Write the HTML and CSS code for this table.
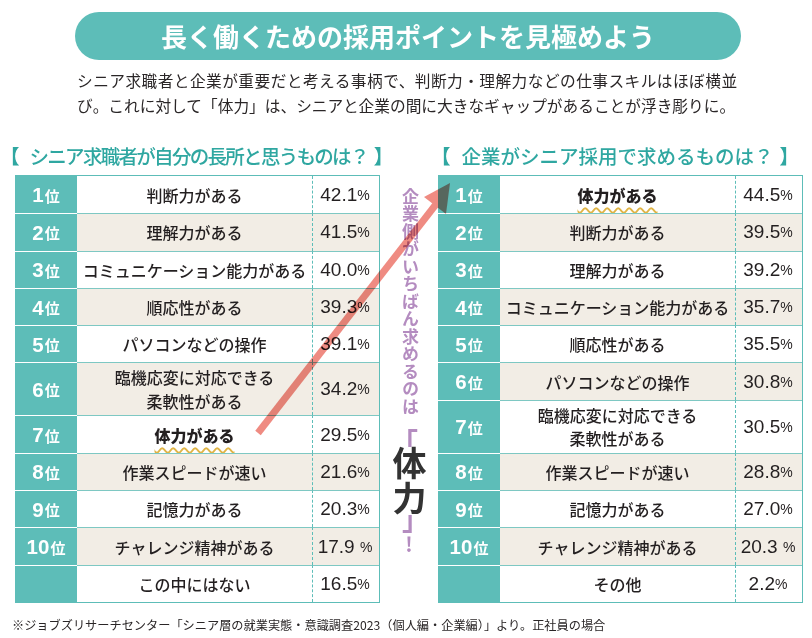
FILE: index.html
```html
<!DOCTYPE html>
<html lang="ja">
<head>
<meta charset="utf-8">
<link rel="stylesheet" href="styles.css">
</head>
<body>
<div class="page">
  <h1 class="title">長く働くための採用ポイントを見極めよう</h1>
  <p class="lead"><span class="l1">シニア求職者と企業が重要だと考える事柄で、判断力・理解力などの仕事スキルはほぼ横並</span><br><span class="l2">び。これに対して「体力」は、シニアと企業の間に大きなギャップがあることが浮き彫りに。</span></p>

  <div class="main">
    <h2 class="head head-left"><span class="bk bk-o">【</span><span class="ht">シニア求職者が自分の長所と思うものは？</span><span class="bk bk-c">】</span></h2>
    <h2 class="head head-right"><span class="bk bk-o">【</span><span class="ht">企業がシニア採用で求めるものは？</span><span class="bk bk-c">】</span></h2>

    <div class="rank-table t-left">
      <div class="row"><div class="rk"><b>1</b>位</div><div class="lb">判断力がある</div><div class="pc">42.1<small>%</small></div></div>
      <div class="row alt"><div class="rk"><b>2</b>位</div><div class="lb">理解力がある</div><div class="pc">41.5<small>%</small></div></div>
      <div class="row"><div class="rk"><b>3</b>位</div><div class="lb">コミュニケーション能力がある</div><div class="pc">40.0<small>%</small></div></div>
      <div class="row alt"><div class="rk"><b>4</b>位</div><div class="lb">順応性がある</div><div class="pc">39.3<small>%</small></div></div>
      <div class="row"><div class="rk"><b>5</b>位</div><div class="lb">パソコンなどの操作</div><div class="pc">39.1<small>%</small></div></div>
      <div class="row alt tall"><div class="rk"><b>6</b>位</div><div class="lb two">臨機応変に対応できる<br>柔軟性がある</div><div class="pc">34.2<small>%</small></div></div>
      <div class="row"><div class="rk"><b>7</b>位</div><div class="lb"><span class="hl">体力がある</span></div><div class="pc">29.5<small>%</small></div></div>
      <div class="row alt"><div class="rk"><b>8</b>位</div><div class="lb">作業スピードが速い</div><div class="pc">21.6<small>%</small></div></div>
      <div class="row"><div class="rk"><b>9</b>位</div><div class="lb">記憶力がある</div><div class="pc">20.3<small>%</small></div></div>
      <div class="row alt"><div class="rk"><b>10</b>位</div><div class="lb">チャレンジ精神がある</div><div class="pc">17.9 <small>%</small></div></div>
      <div class="row"><div class="rk"></div><div class="lb">この中にはない</div><div class="pc">16.5<small>%</small></div></div>
    </div>

    <div class="middle">
      <div class="vphrase">企業側がいちばん求めるのは</div>
      <div class="br br-open">「</div>
      <div class="big">体力</div>
      <div class="br br-close">」</div>
      <div class="excl">!</div>
    </div>

    <div class="rank-table t-right">
      <div class="row"><div class="rk"><b>1</b>位</div><div class="lb"><span class="hl">体力がある</span></div><div class="pc">44.5<small>%</small></div></div>
      <div class="row alt"><div class="rk"><b>2</b>位</div><div class="lb">判断力がある</div><div class="pc">39.5<small>%</small></div></div>
      <div class="row"><div class="rk"><b>3</b>位</div><div class="lb">理解力がある</div><div class="pc">39.2<small>%</small></div></div>
      <div class="row alt"><div class="rk"><b>4</b>位</div><div class="lb">コミュニケーション能力がある</div><div class="pc">35.7<small>%</small></div></div>
      <div class="row"><div class="rk"><b>5</b>位</div><div class="lb">順応性がある</div><div class="pc">35.5<small>%</small></div></div>
      <div class="row alt"><div class="rk"><b>6</b>位</div><div class="lb">パソコンなどの操作</div><div class="pc">30.8<small>%</small></div></div>
      <div class="row tall"><div class="rk"><b>7</b>位</div><div class="lb two">臨機応変に対応できる<br>柔軟性がある</div><div class="pc">30.5<small>%</small></div></div>
      <div class="row alt"><div class="rk"><b>8</b>位</div><div class="lb">作業スピードが速い</div><div class="pc">28.8<small>%</small></div></div>
      <div class="row"><div class="rk"><b>9</b>位</div><div class="lb">記憶力がある</div><div class="pc">27.0<small>%</small></div></div>
      <div class="row alt"><div class="rk"><b>10</b>位</div><div class="lb">チャレンジ精神がある</div><div class="pc">20.3 <small>%</small></div></div>
      <div class="row"><div class="rk"></div><div class="lb">その他</div><div class="pc">2.2<small>%</small></div></div>
    </div>
  </div>

  <p class="note">※ジョブズリサーチセンター「シニア層の就業実態・意識調査2023（個人編・企業編）」より。正社員の場合</p>

  <svg class="arrow" width="812" height="638" viewBox="0 0 812 638">
    <line x1="258" y1="433" x2="437" y2="203" stroke="#ef8b82" stroke-width="7" stroke-linecap="butt"/>
    <polygon points="450,183 446,214 424,197" fill="#ef8b82"/>
  </svg>
</div>
</body>
</html>
```

FILE: styles.css
```css
* { box-sizing: border-box; }
html, body { margin: 0; padding: 0; background: #fff; }
body {
  font-family: "Noto Sans CJK JP", "Noto Sans", sans-serif;
  color: #231f20;
}
.page {
  position: relative;
  width: 812px;
  height: 638px;
  overflow: hidden;
}
.title {
  margin: 12px 0 0 75px;
  width: 666px;
  height: 48px;
  border-radius: 24px;
  background: #5dbdb8;
  color: #fff;
  font-size: 26px;
  font-weight: 700;
  line-height: 48px;
  text-align: center;
}
.lead {
  margin: 8px 0 0 77px;
  font-size: 15.7px;
  line-height: 25px;
  color: #2a2627;
  white-space: nowrap;
}
.lead .l1 { letter-spacing: 0.45px; }
.lead .l2 { letter-spacing: 0; }
.main {
  display: grid;
  grid-template-columns: 365px 58px 365px;
  grid-template-rows: 28px auto;
  row-gap: 5px;
  margin: 24px 0 0 15px;
}
.head {
  margin: 0;
  display: flex;
  align-items: center;
  font-size: 19.5px;
  font-weight: 500;
  line-height: 28px;
  color: #2fa7a1;
  white-space: nowrap;
}
.bk { font-weight: 700; }
.head-left {
  grid-column: 1 / 3;
  grid-row: 1;
  margin-left: -15px;
}
.head-left .bk-o { margin-right: 10px; }
.head-left .ht { letter-spacing: -1.7px; }
.head-left .bk-c { margin-left: 6px; }
.head-right {
  grid-column: 3;
  grid-row: 1;
  margin-left: -7px;
}
.head-right .bk-o { margin-right: 11px; }
.head-right .bk-c { margin-left: 6px; }
.rank-table {
  grid-row: 2;
  border: 1px solid #5dbdb8;
  border-left: none;
}
.t-left { grid-column: 1; }
.t-right { grid-column: 3; }
.row {
  display: grid;
  grid-template-columns: 62px 1fr 67px;
  height: 37.3px;
  background: #fff;
}
.row.alt { background: #f2ede5; }
.row.tall { height: 53px; }
.row + .row .lb,
.row + .row .pc { border-top: 1.5px solid #7ec8c3; }
.row + .row .rk { border-top: 1.5px solid #fff; }
.rk {
  background: #5dbdb8;
  color: #fff;
  display: flex;
  align-items: center;
  justify-content: center;
  font-size: 15px;
  font-weight: 700;
  padding-top: 1px;
}
.rk b {
  font-family: "Liberation Sans", Arial, sans-serif;
  font-size: 20.5px;
  font-weight: 700;
  margin-right: 1px;
}
.lb {
  display: flex;
  align-items: center;
  justify-content: center;
  text-align: center;
  font-size: 16px;
  font-weight: 500;
  line-height: 20px;
  white-space: nowrap;
}
.lb.two { line-height: 23.5px; padding-top: 1px; }
.pc {
  display: flex;
  align-items: center;
  justify-content: center;
  border-left: 1px dashed #5dbdb8;
  font-family: "Liberation Sans", Arial, sans-serif;
  font-size: 19px;
  white-space: pre;
  padding-right: 2px;
}
.pc small { font-size: 14px; }
.hl {
  font-weight: 900;
  text-decoration: underline wavy #e0b445;
  text-decoration-thickness: 1.5px;
  text-underline-offset: 5px;
}
.middle {
  grid-column: 2;
  grid-row: 2;
  display: flex;
  flex-direction: column;
  align-items: center;
  padding-top: 13px;
  color: #b48cc0;
}
.vphrase {
  writing-mode: vertical-rl;
  font-size: 17px;
  font-weight: 700;
  letter-spacing: 0.5px;
  line-height: 18px;
  margin-left: 2px;
}
.br {
  font-size: 27px;
  font-weight: 700;
  line-height: 27px;
  height: 27px;
}
.br-open { margin-top: 12px; margin-left: -9px; height: 18px; }
.br-close { margin-top: -11px; margin-left: 13px; }
.big {
  writing-mode: vertical-rl;
  font-size: 34px;
  font-weight: 700;
  line-height: 36px;
  letter-spacing: 1px;
  color: #333;
  margin-top: 0;
}
.excl {
  font-size: 20px;
  font-weight: 700;
  line-height: 22px;
  margin-top: 1px;
}
.note {
  margin: 12px 0 0 12px;
  font-size: 12.2px;
  line-height: 20px;
  color: #2a2627;
  white-space: nowrap;
}
.arrow {
  position: absolute;
  left: 0;
  top: 0;
  pointer-events: none;
  mix-blend-mode: multiply;
}
```
